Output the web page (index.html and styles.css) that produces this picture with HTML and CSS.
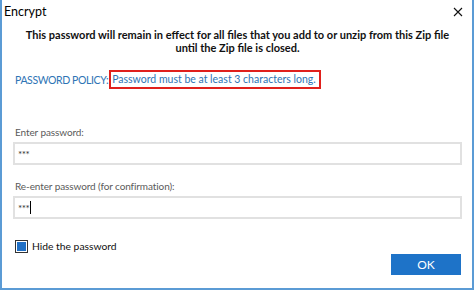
FILE: index.html
```html
<!DOCTYPE html>
<html>
<head>
<meta charset="utf-8">
<link rel="stylesheet" href="styles.css">
</head>
<body>
<div class="window">
  <div class="titlebar">
    <span class="title">Encrypt</span>
    <svg class="close" width="10" height="10" viewBox="0 0 10 10"><path d="M1 1L9 9M9 1L1 9" stroke="#111" stroke-width="1.1" fill="none"/></svg>
  </div>
  <div class="content">
    <p class="message">This password will remain in effect for all files that you add to or unzip from this Zip file<br>until the Zip file is closed.</p>
    <div class="policy">
      <span class="policy-label">PASSWORD POLICY:</span><span class="policy-box">Password must be at least 3 characters long.</span>
    </div>
    <div class="label first">Enter password:</div>
    <div class="input">***</div>
    <div class="label">Re-enter password (for confirmation):</div>
    <div class="input">***<span class="caret"></span></div>
    <div class="check-row">
      <span class="checkbox"><span class="check-fill"></span></span>
      <span class="check-label">Hide the password</span>
    </div>
    <div class="button-row">
      <div class="ok">OK</div>
    </div>
  </div>
</div>
</body>
</html>
```
FILE: styles.css
```css
html, body {
  margin: 0;
  padding: 0;
  background: #ffffff;
}
.window {
  width: 474px;
  height: 290px;
  box-sizing: border-box;
  border-left: 2px solid #5b9bd5;
  border-right: 2px solid #5b9bd5;
  border-bottom: 2px solid #5b9bd5;
  background: #ffffff;
  font-family: Lato, "Open Sans", sans-serif;
  font-size: 12px;
  color: #000;
  display: flex;
  flex-direction: column;
  overflow: hidden;
}
.titlebar {
  height: 22px;
  flex: none;
  display: flex;
  align-items: center;
  justify-content: space-between;
  padding-left: 2px;
  padding-right: 9px;
}
.title {
  font-size: 12.5px;
  line-height: 14px;
  margin-top: 1px;
}
.close {
  display: block;
  margin-top: 1px;
}
.content {
  display: flex;
  flex-direction: column;
  padding: 0 10px 0 11px;
}
.message {
  margin: 6px 0 0 0;
  font-weight: bold;
  text-align: center;
  font-size: 11px;
  line-height: 13px;
  white-space: nowrap;
  color: #111;
}
.policy {
  margin-top: 16px;
  display: flex;
  align-items: center;
  padding-left: 2px;
  color: #2e74b5;
  font-size: 10.5px;
  white-space: nowrap;
}
.policy-label {
  letter-spacing: -0.4px;
}
.policy-box {
  border: 2px solid #e0201c;
  height: 15px;
  line-height: 15px;
  padding: 0 3px 0 1px;
  margin-left: 1px;
}
.label {
  margin-top: 14px;
  padding-left: 2px;
  color: #5a5a5a;
  font-size: 10px;
  letter-spacing: -0.1px;
  line-height: 14px;
}
.label.first {
  margin-top: 36px;
}
.input {
  margin-top: 3px;
  height: 19px;
  border: 2px solid #e1e1e1;
  display: flex;
  align-items: center;
  padding-left: 3px;
  font-size: 10px;
  color: #333;
  letter-spacing: -0.5px;
}
.caret {
  display: inline-block;
  width: 1px;
  height: 13px;
  background: #000;
  margin-left: 1px;
}
.check-row {
  margin-top: 20px;
  display: flex;
  align-items: center;
  padding-left: 2px;
}
.checkbox {
  width: 13px;
  height: 13px;
  box-sizing: border-box;
  border: 1px solid #333;
  display: flex;
  align-items: center;
  justify-content: center;
  background: #fff;
}
.check-fill {
  width: 9px;
  height: 9px;
  background: #1f6fc5;
}
.check-label {
  margin-left: 4px;
  font-size: 10.3px;
  color: #111;
  line-height: 14px;
}
.button-row {
  display: flex;
  justify-content: flex-end;
  margin-top: 1px;
  padding-right: 1px;
}
.ok {
  width: 70px;
  height: 21px;
  background: #1e73c8;
  color: #fff;
  font-size: 12px;
  line-height: 21px;
  text-align: center;
}
```
